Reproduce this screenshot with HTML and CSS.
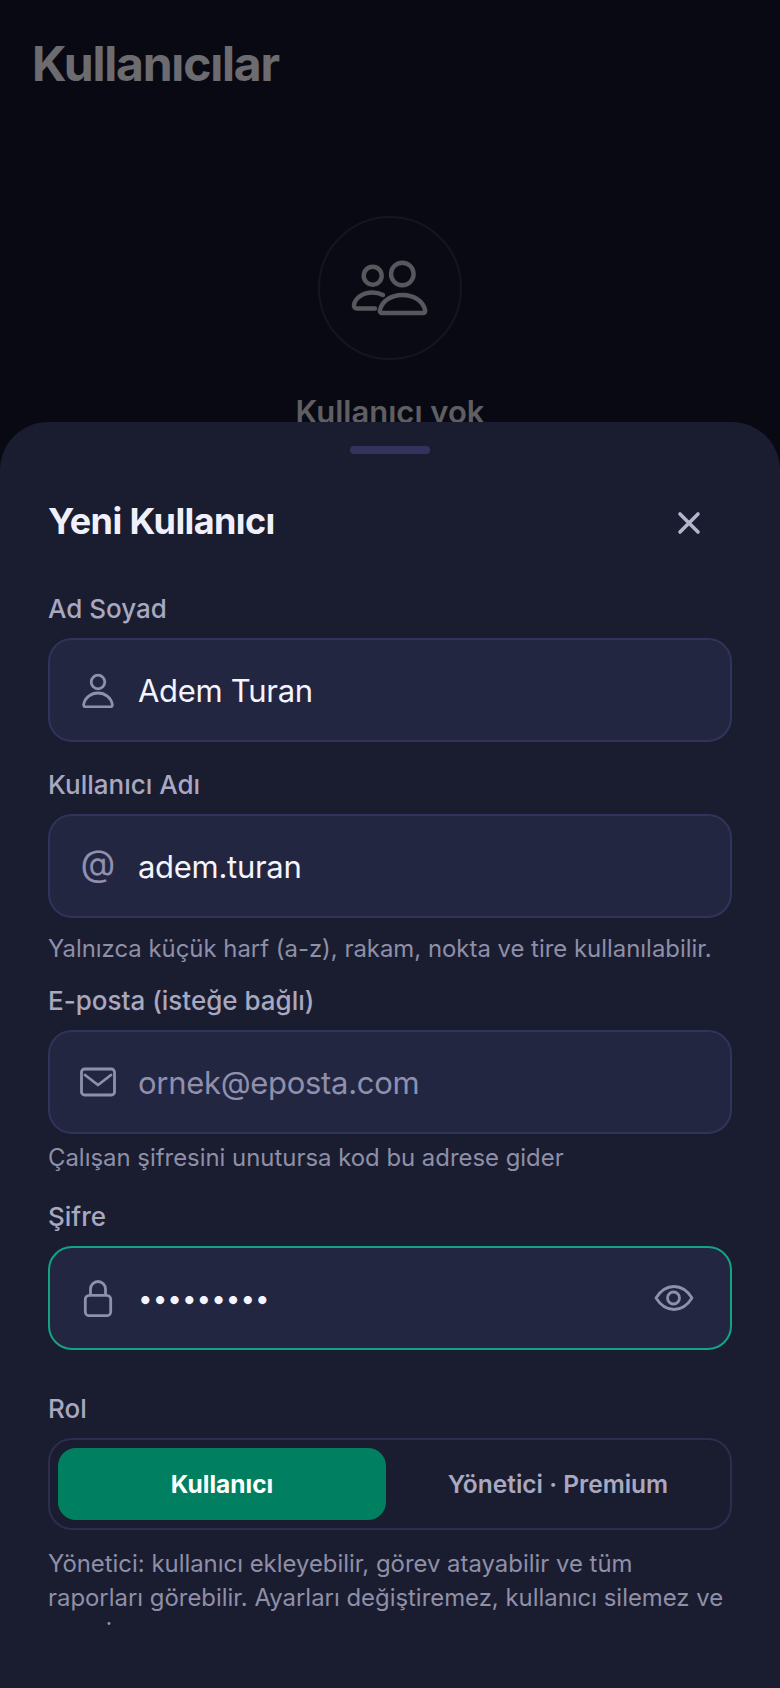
FILE: index.html
```html
<!DOCTYPE html>
<html lang="tr">
<head>
    <meta charset="UTF-8">
    <meta name="viewport" content="width=device-width, initial-scale=1.0">
    <title>Kullanıcılar</title>
    <link rel="stylesheet" href="styles.css">
</head>
<body>
    <div class="screen">

        <!-- Page behind the sheet -->
        <h1 class="page-title">Kullanıcılar</h1>
        <div class="empty">
            <div class="empty-circle">
                <svg width="80" height="60" viewBox="0 0 80 60" fill="none" stroke="#c0c0ce" stroke-width="4.4" stroke-linecap="round" stroke-linejoin="round">
                    <circle cx="52.3" cy="16" r="11.3"/>
                    <circle cx="22.7" cy="17.7" r="9"/>
                    <path d="M32 55h41c1.500 0 2.500-1.200 2.200-2.600C73 43 64 37 52.500 37S32 43 29.800 52.400C29.500 53.800 30.500 55 32 55z"/>
                    <path d="M33 37c-3-1.500-6-2.500-10.500-2.500C13 34.500 5 40 4 47c-.3 2 1 3.500 3 3.500h18"/>
                </svg>
            </div>
            <div class="empty-title">Kullanıcı yok</div>
        </div>

        <div class="overlay"></div>

        <!-- Bottom sheet -->
        <div class="sheet">
            <div class="handle"></div>
            <div class="sheet-header">
                <h2>Yeni Kullanıcı</h2>
                <svg class="close" width="24" height="24" viewBox="0 0 24 24" fill="none" stroke="#b4b4cc" stroke-width="3.6" stroke-linecap="round">
                    <path d="M3 3l18 18M21 3L3 21"/>
                </svg>
            </div>

            <div class="sheet-body">
                <div class="label">Ad Soyad</div>
                <div class="field">
                    <span class="field-icon">
                        <svg width="36" height="36" viewBox="0 0 36 36" fill="none" stroke="#8f8fae" stroke-width="2.800">
                            <circle cx="18" cy="10" r="6.800"/>
                            <path d="M6 35h24c1.500 0 2.600-1.200 2.300-2.700C31 25.500 25 21 18 21S5 25.500 3.700 32.300C3.400 33.800 4.500 35 6 35z"/>
                        </svg>
                    </span>
                    <span class="value">Adem Turan</span>
                </div>

                <div class="label label-next">Kullanıcı Adı</div>
                <div class="field">
                    <span class="field-icon at">@</span>
                    <span class="value">adem.turan</span>
                </div>
                <p class="hint hint-first">Yalnızca küçük harf (a-z), rakam, nokta ve tire kullanılabilir.</p>

                <div class="label label-after-hint">E-posta (isteğe bağlı)</div>
                <div class="field">
                    <span class="field-icon">
                        <svg width="36" height="36" viewBox="0 0 36 36" fill="none" stroke="#8f8fae" stroke-width="2.800" stroke-linejoin="round" stroke-linecap="round">
                            <rect x="1.500" y="5" width="33" height="26" rx="3"/>
                            <path d="M5 11l13 10 13-10"/>
                        </svg>
                    </span>
                    <span class="value placeholder">ornek@eposta.com</span>
                </div>
                <p class="hint">Çalışan şifresini unutursa kod bu adrese gider</p>

                <div class="label label-password">Şifre</div>
                <div class="field field-focus">
                    <span class="field-icon">
                        <svg width="36" height="38" viewBox="0 0 36 38" fill="none" stroke="#8f8fae" stroke-width="2.800" stroke-linejoin="round">
                            <rect x="5.300" y="16.300" width="25.400" height="20.400" rx="4"/>
                            <path d="M10.500 16v-6a7.500 7.500 0 0 1 15 0v6"/>
                        </svg>
                    </span>
                    <span class="value dots">•••••••••</span>
                    <svg class="eye" width="40" height="28" viewBox="0 0 40 28" fill="none" stroke="#8f8fae" stroke-width="2.800" stroke-linejoin="round">
                        <path d="M2 14C7 6 13 2.500 20 2.500S33 6 38 14c-5 8-11 11.500-18 11.500S7 22 2 14z"/>
                        <circle cx="19.500" cy="14" r="6"/>
                    </svg>
                </div>

                <div class="label label-role">Rol</div>
                <div class="segment">
                    <div class="segment-item active">Kullanıcı</div>
                    <div class="segment-item">Yönetici · Premium</div>
                </div>
                <p class="hint role-note">Yönetici: kullanıcı ekleyebilir, görev atayabilir ve tüm raporları görebilir. Ayarları değiştiremez, kullanıcı silemez ve premium.</p>
            </div>
        </div>
    </div>
</body>
</html>
```

FILE: styles.css
```css
/* General Styles */
* {
    box-sizing: border-box;
}

body {
    margin: 0;
    background-color: #13152a;
    font-family: Inter, "Noto Sans", sans-serif;
}

.screen {
    position: relative;
    height: 1688px;
    overflow: hidden;
}

/* Page behind the sheet */
.page-title {
    margin: 0;
    padding: 38px 32px 0;
    font-size: 48px;
    line-height: 52px;
    font-weight: 700;
    letter-spacing: -1.2px;
    color: #f0f0f8;
}

.empty {
    display: flex;
    flex-direction: column;
    align-items: center;
    padding-top: 126px;
}

.empty-circle {
    width: 144px;
    height: 144px;
    border-radius: 50%;
    border: 2px solid #2e3046;
    background-color: #15172a;
    display: flex;
    align-items: center;
    justify-content: center;
}

.empty-title {
    margin-top: 32px;
    font-size: 31px;
    line-height: 40px;
    font-weight: 600;
    color: #d0d0dc;
}

.overlay {
    position: absolute;
    inset: 0;
    background: rgba(0, 0, 0, 0.55);
}

/* Bottom sheet */
.sheet {
    position: absolute;
    top: 422px;
    left: 0;
    right: 0;
    bottom: 0;
    padding: 24px 48px 0;
    background-color: #1a1d30;
    border-radius: 48px 48px 0 0;
}

.handle {
    width: 80px;
    height: 8px;
    margin: 0 auto;
    border-radius: 4px;
    background-color: #32345e;
}

.sheet-header {
    display: flex;
    align-items: center;
    justify-content: space-between;
    height: 48px;
    margin-top: 43px;
    padding-right: 31px;
}

.sheet-header h2 {
    margin: 0;
    font-size: 36px;
    font-weight: 700;
    letter-spacing: -0.6px;
    color: #f0f0fa;
}

.close {
    margin-top: 4px;
}

.sheet-body {
    height: 1031px;
    margin-top: 49px;
    overflow: hidden;
}

/* Form */
.label {
    font-size: 26px;
    line-height: 30px;
    font-weight: 500;
    color: #a8a8c0;
    margin-bottom: 14px;
}

.label-next {
    margin-top: 28px;
}

.label-after-hint {
    margin-top: 22px;
}

.label-password {
    margin-top: 29px;
}

.label-role {
    margin-top: 44px;
}

.field {
    display: flex;
    align-items: center;
    height: 104px;
    padding: 0 36px 0 30px;
    background-color: #232640;
    border: 2px solid #31335a;
    border-radius: 24px;
}

.field-focus {
    border-color: #12a585;
}

.field-icon {
    flex: none;
    display: flex;
    align-items: center;
    justify-content: center;
    width: 36px;
    margin-right: 22px;
}

.at {
    padding-bottom: 6px;
    font-size: 36px;
    color: #8f8fae;
}

.value {
    flex: 1;
    font-size: 31px;
    letter-spacing: -0.3px;
    color: #f4f4fc;
}

.placeholder {
    color: #8f8fae;
}

.dots {
    font-size: 26px;
    letter-spacing: 0;
}

.hint {
    margin: 9px 0 0;
    font-size: 23.9px;
    line-height: 30px;
    color: #8f8fa8;
}

.hint-first {
    margin-top: 16px;
}

.role-note {
    margin-top: 17px;
    line-height: 34px;
}

/* Role switch */
.segment {
    display: flex;
    gap: 8px;
    padding: 8px;
    background-color: #1a1d30;
    border: 2px solid #2c2e50;
    border-radius: 24px;
}

.segment-item {
    flex: 1;
    height: 72px;
    display: flex;
    align-items: center;
    justify-content: center;
    border-radius: 18px;
    font-size: 24.5px;
    font-weight: 600;
    color: #a8a8c0;
}

.segment-item.active {
    background-color: #008060;
    color: white;
    font-weight: 700;
}
```
